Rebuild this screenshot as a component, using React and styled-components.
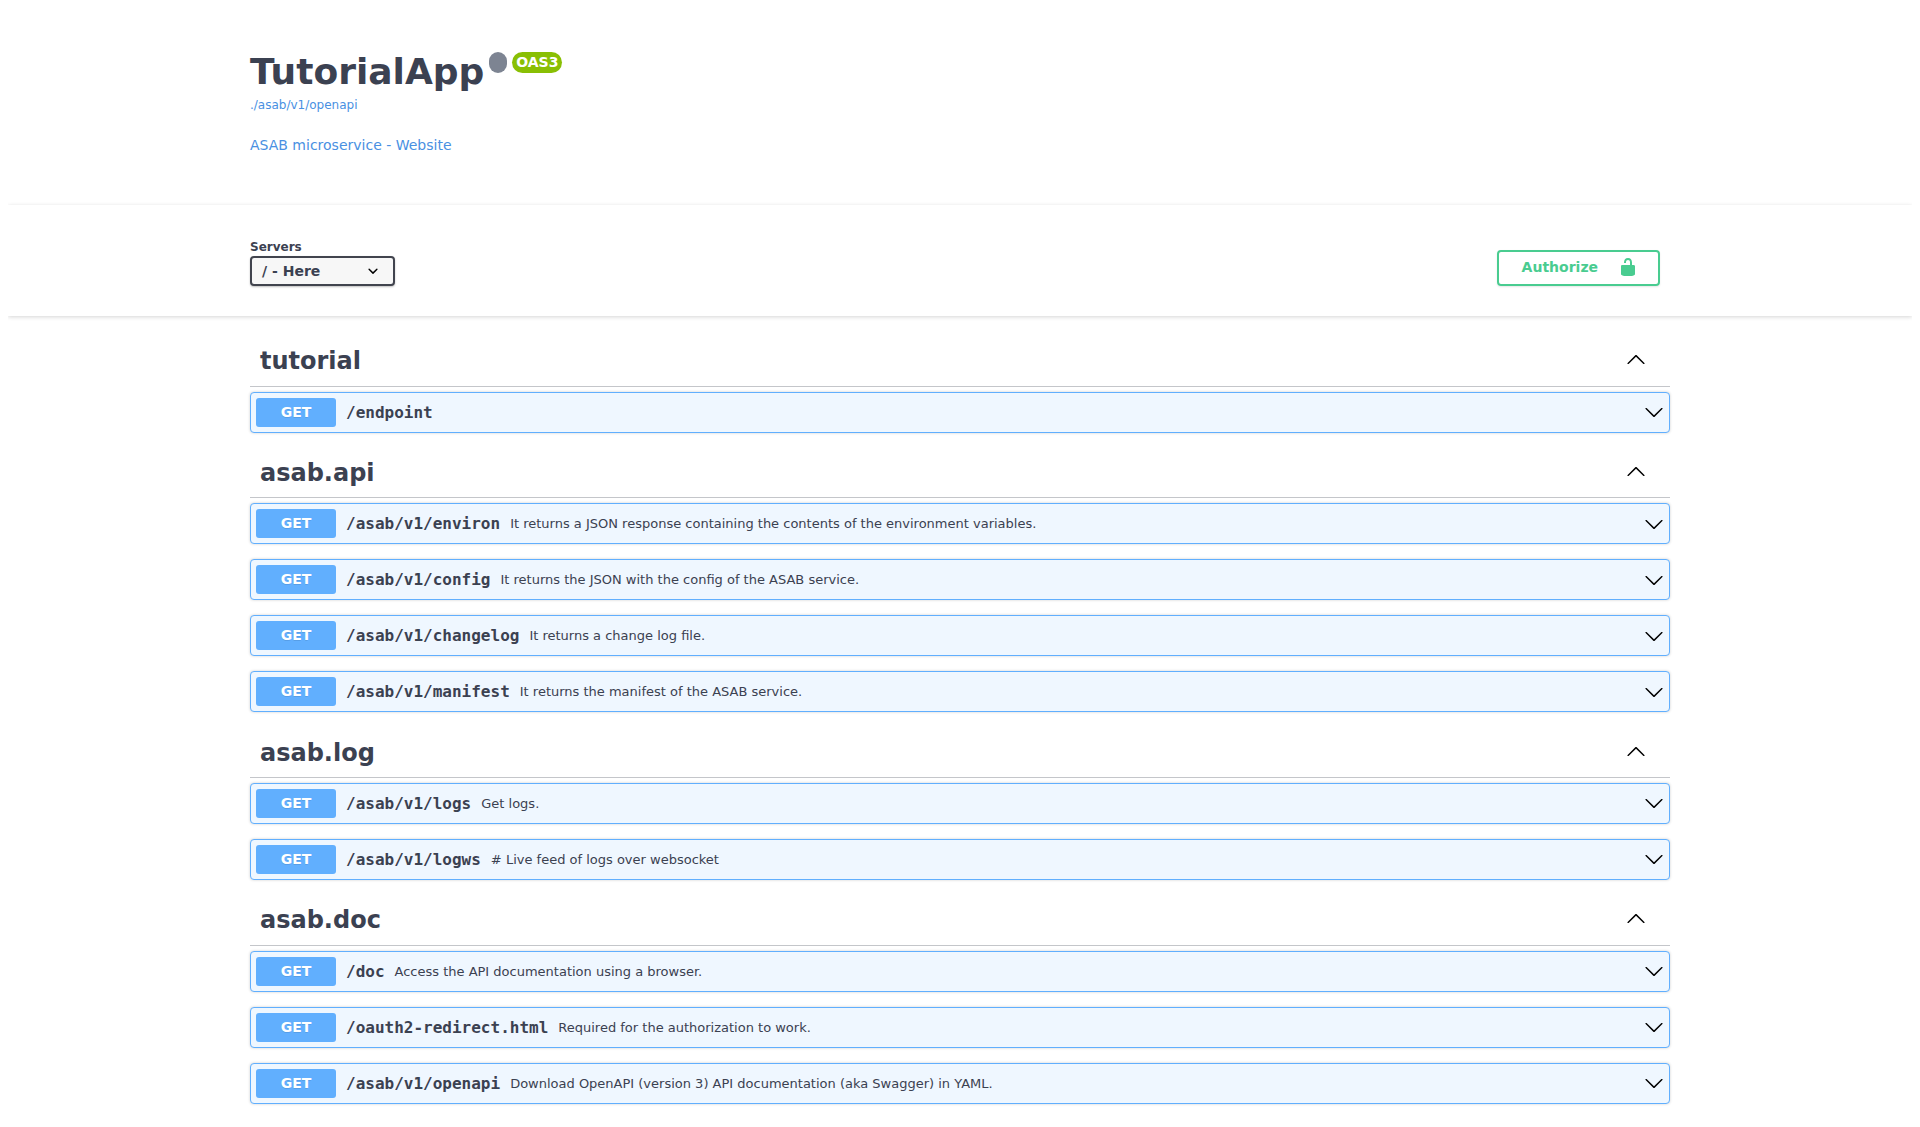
import React from "react";
import styled, { createGlobalStyle } from "styled-components";

const Global = createGlobalStyle`
  html { box-sizing: border-box; background: #fff; overflow: hidden; }
  *, *::before, *::after { box-sizing: inherit; }
  body { margin: 8px; font-family: "DejaVu Sans", sans-serif; color: #3b4151; }
`;

const Wrapper = styled.div`
  width: 100%;
  max-width: 1460px;
  margin: 0 auto;
  padding: 0 20px;
`;

const Info = styled.header`
  height: 197px;
  padding-top: 43px;
`;

const Title = styled.h2`
  display: flex;
  align-items: flex-start;
  margin: 0;
  font-size: 36px;
  line-height: 42px;
`;

const Stamp = styled.small`
  width: ${(p) => p.$width}px;
  height: 21px;
  margin: 1px 0 0 5px;
  border-radius: 57px;
  background: ${(p) => p.$color};
  color: #fff;
  font-size: 14px;
  line-height: 20px;
  text-align: center;
`;

const Link = styled.a`
  display: block;
  width: max-content;
  color: #4990e2;
  text-decoration: none;
  font-size: ${(p) => p.$size}px;
  line-height: 18px;
  margin-top: ${(p) => p.$gap}px;
`;

const Schemes = styled.section`
  height: 111px;
  padding-top: 30px;
  margin-bottom: 20px;
  background: #fff;
  box-shadow: 0 1px 4px 0 rgba(0, 0, 0, 0.17);
`;

const SchemesRow = styled(Wrapper)`
  display: flex;
  justify-content: space-between;
`;

const Servers = styled.label`
  display: flex;
  flex-direction: column;
  padding-top: 5px;
  font-size: 12px;
  font-weight: 700;
  line-height: 15px;
`;

const Select = styled.div`
  display: flex;
  align-items: center;
  justify-content: space-between;
  width: 145px;
  height: 30px;
  margin-top: 1px;
  padding: 0 10px 0 10px;
  border: 2px solid #41444e;
  border-radius: 4px;
  background: #f7f7f7;
  box-shadow: 0 1px 2px 0 rgba(0, 0, 0, 0.25);
  font-size: 14px;
`;

const Authorize = styled.button`
  display: flex;
  align-items: center;
  justify-content: space-between;
  width: 163px;
  height: 36px;
  margin: 15px 10px 0 0;
  padding: 0 20px 3px 22.6px;
  border: 2px solid #49cc90;
  border-radius: 4px;
  background: transparent;
  box-shadow: 0 1px 2px rgba(0, 0, 0, 0.1);
  color: #49cc90;
  font: 700 14px "DejaVu Sans", sans-serif;
`;

const Tag = styled.h3`
  display: flex;
  align-items: flex-start;
  justify-content: space-between;
  height: 50.7px;
  margin: 0 0 5px;
  padding: 11.3px 24px 0 10px;
  border-bottom: 1px solid rgba(59, 65, 81, 0.3);
  font-size: 24px;
  line-height: 28px;

  svg {
    margin-top: 2px;
  }
`;

const Operation = styled.div`
  display: flex;
  align-items: center;
  height: 41px;
  margin-bottom: 15px;
  padding: 5px;
  border: 1px solid #61affe;
  border-radius: 4px;
  background: #eff7ff;
  box-shadow: 0 0 3px rgba(0, 0, 0, 0.19);

  svg {
    margin-bottom: 0.6px;
  }
`;

const Method = styled.span`
  width: 80px;
  height: 29px;
  border-radius: 3px;
  background: #61affe;
  color: #fff;
  font-size: 14px;
  font-weight: 700;
  line-height: 28px;
  text-align: center;
  text-shadow: 0 1px 0 rgba(0, 0, 0, 0.1);
`;

const Path = styled.span`
  padding: 0 10px;
  font-family: "DejaVu Sans Mono", monospace;
  font-size: 16px;
  font-weight: 600;
`;

const Summary = styled.span`
  flex: 1;
  font-size: 13px;
`;

const Arrow = ({ up }) => (
  <svg width="20" height="20" viewBox="0 0 20 20" fill="#000">
    {up ? (
      <path d="M 17.418 14.908 C 17.69 15.176 18.127 15.176 18.397 14.908 C 18.667 14.64 18.668 14.207 18.397 13.939 L 10.489 6.109 C 10.219 5.841 9.782 5.841 9.51 6.109 L 1.602 13.939 C 1.332 14.207 1.332 14.64 1.602 14.908 C 1.873 15.176 2.311 15.176 2.581 14.908 L 10 7.767 L 17.418 14.908 Z" />
    ) : (
      <path d="M17.418 6.109c.272-.268.709-.268.979 0s.271.701 0 .969l-7.908 7.83c-.27.268-.707.268-.979 0l-7.908-7.83c-.27-.268-.27-.701 0-.969.271-.268.709-.268.979 0L10 13.25l7.418-7.141z" />
    )}
  </svg>
);

const SelectArrow = () => (
  <svg width="20" height="20" viewBox="0 0 20 20">
    <path d="M13.418 7.859a.695.695 0 0 1 .978 0 .68.68 0 0 1 0 .969l-3.908 3.83a.697.697 0 0 1-.979 0l-3.908-3.83a.68.68 0 0 1 0-.969.695.695 0 0 1 .978 0L10 11l3.418-3.141z" />
  </svg>
);

const Unlocked = () => (
  <svg width="20" height="20" viewBox="0 0 20 20" fill="#49cc90">
    <path d="M15.8 8H14V5.6C14 2.703 12.665 1 10 1 7.334 1 6 2.703 6 5.6V6h2v-.801C8 3.754 8.797 3 10 3c1.203 0 2 .754 2 2.199V8H4c-.553 0-1 .646-1 1.199V17c0 .549.428 1.139.951 1.307l1.197.387C5.672 18.861 6.55 19 7.1 19h5.8c.549 0 1.428-.139 1.951-.307l1.196-.387c.524-.167.953-.757.953-1.306V9.199C17 8.646 16.352 8 15.8 8z" />
  </svg>
);

const groups = [
  { name: "tutorial", operations: [["/endpoint", ""]] },
  {
    name: "asab.api",
    operations: [
      ["/asab/v1/environ", "It returns a JSON response containing the contents of the environment variables."],
      ["/asab/v1/config", "It returns the JSON with the config of the ASAB service."],
      ["/asab/v1/changelog", "It returns a change log file."],
      ["/asab/v1/manifest", "It returns the manifest of the ASAB service."],
    ],
  },
  {
    name: "asab.log",
    operations: [
      ["/asab/v1/logs", "Get logs."],
      ["/asab/v1/logws", "# Live feed of logs over websocket"],
    ],
  },
  {
    name: "asab.doc",
    operations: [
      ["/doc", "Access the API documentation using a browser."],
      ["/oauth2-redirect.html", "Required for the authorization to work."],
      ["/asab/v1/openapi", "Download OpenAPI (version 3) API documentation (aka Swagger) in YAML."],
    ],
  },
];

export default function App() {
  return (
    <>
      <Global />
      <Wrapper>
        <Info>
          <Title>
            TutorialApp
            <Stamp $width={18} $color="#7d8492" />
            <Stamp $width={50} $color="#89bf04">OAS3</Stamp>
          </Title>
          <Link $size={12} $gap={3}>./asab/v1/openapi</Link>
          <Link $size={14} $gap={22}>ASAB microservice - Website</Link>
        </Info>
      </Wrapper>
      <Schemes>
        <SchemesRow>
          <Servers>
            Servers
            <Select>
              / - Here
              <SelectArrow />
            </Select>
          </Servers>
          <Authorize>
            Authorize
            <Unlocked />
          </Authorize>
        </SchemesRow>
      </Schemes>
      <Wrapper>
        {groups.map((group) => (
          <section key={group.name}>
            <Tag>
              {group.name}
              <Arrow up />
            </Tag>
            {group.operations.map(([path, summary]) => (
              <Operation key={path}>
                <Method>GET</Method>
                <Path>{path}</Path>
                <Summary>{summary}</Summary>
                <Arrow />
              </Operation>
            ))}
          </section>
        ))}
      </Wrapper>
    </>
  );
}
